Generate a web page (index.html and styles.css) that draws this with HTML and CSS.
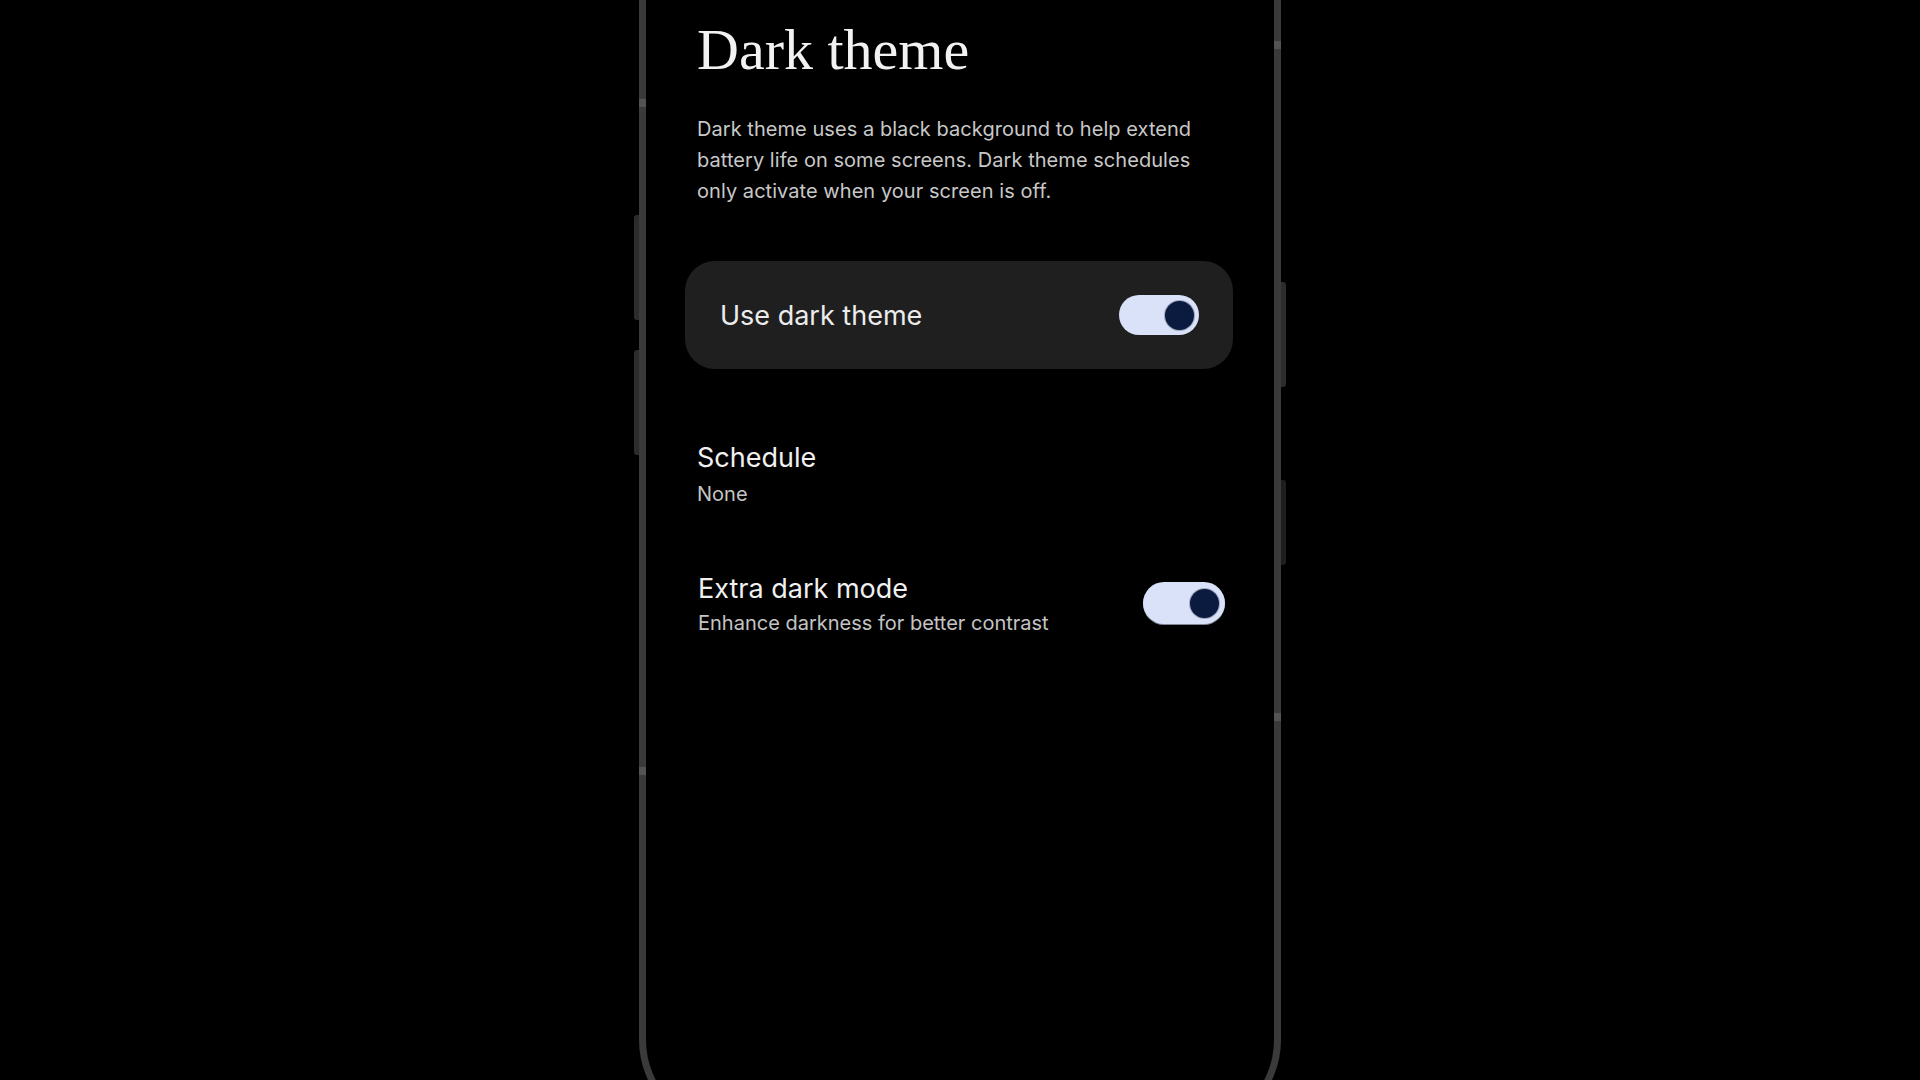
FILE: index.html
```html
<!DOCTYPE html>
<html lang="en">
<head>
<meta charset="utf-8">
<title>Dark theme</title>
<link rel="stylesheet" href="styles.css">
</head>
<body>
<div class="stage">
  <div class="phone">
    <span class="btn btn-l1"></span>
    <span class="btn btn-l2"></span>
    <span class="btn btn-r1"></span>
    <span class="btn btn-r2"></span>
    <span class="band band-l1"></span>
    <span class="band band-l2"></span>
    <span class="band band-r1"></span>
    <span class="band band-r2"></span>
    <div class="screen">
      <h1 class="title">Dark theme</h1>
      <p class="desc">Dark theme uses a black background to help extend battery life on some screens. Dark theme schedules only activate when your screen is off.</p>
      <div class="card">
        <span class="card-label">Use dark theme</span>
        <span class="switch"><span class="thumb"></span></span>
      </div>
      <div class="item schedule">
        <div class="item-title">Schedule</div>
        <div class="item-sub">None</div>
      </div>
      <div class="item extra">
        <div class="item-text">
          <div class="item-title">Extra dark mode</div>
          <div class="item-sub">Enhance darkness for better contrast</div>
        </div>
        <span class="switch switch-lg"><span class="thumb"></span></span>
      </div>
    </div>
  </div>
</div>
</body>
</html>
```

FILE: styles.css
```css
html, body {
  margin: 0;
  padding: 0;
  background: #000;
  width: 1920px;
  height: 1080px;
  overflow: hidden;
}

.stage {
  display: flex;
  justify-content: center;
  height: 1080px;
  overflow: hidden;
}

.phone {
  position: relative;
  box-sizing: border-box;
  width: 642px;
  height: 1233px;
  margin-top: -100px;
  border: 7px solid #3a3a3a;
  border-top: none;
  border-radius: 0 0 93px 93px;
  background: #000;
  flex: none;
}

.btn {
  position: absolute;
  width: 5px;
  background: #2c2c2c;
}
.btn-l1 { left: -12px; top: 315px; height: 105px; border-radius: 3px 0 0 3px; }
.btn-l2 { left: -12px; top: 450px; height: 105px; border-radius: 3px 0 0 3px; }
.btn-r1 { right: -12px; top: 382px; height: 105px; border-radius: 0 3px 3px 0; }
.btn-r2 { right: -12px; top: 580px; height: 85px; border-radius: 0 3px 3px 0; background: #1e1e1e; }

.band {
  position: absolute;
  width: 7px;
  height: 8px;
  background: #535353;
}
.band-l1 { left: -7px; top: 199px; }
.band-l2 { left: -7px; top: 867px; }
.band-r1 { right: -7px; top: 141px; }
.band-r2 { right: -7px; top: 813px; }

.screen {
  padding: 115px 41px 0 39px;
  font-family: Inter, "Noto Sans", sans-serif;
}

.title {
  margin: 0;
  padding-left: 12px;
  font-family: "Liberation Serif", "DejaVu Serif", serif;
  font-weight: 400;
  font-size: 58px;
  line-height: 70px;
  color: #f2f2f2;
}

.desc {
  margin: 29px 0 0 0;
  padding-left: 12px;
  max-width: 530px;
  font-size: 20px;
  line-height: 31px;
  letter-spacing: 0.05px;
  color: #c8c8c8;
}

.card {
  margin-top: 54px;
  height: 108px;
  box-sizing: border-box;
  padding: 0 34px 0 35px;
  background: #1f1f1f;
  border-radius: 30px;
  display: flex;
  align-items: center;
  justify-content: space-between;
}

.card-label {
  padding-top: 2px;
  font-size: 27px;
  line-height: 36px;
  color: #ececec;
}

.switch {
  box-sizing: border-box;
  width: 80px;
  height: 40px;
  border-radius: 20px;
  background: #dae2f9;
  display: flex;
  align-items: center;
  justify-content: flex-end;
  padding-right: 5px;
  flex: none;
}

.switch-lg {
  width: 82px;
  height: 42px;
  border-radius: 21px;
  padding-right: 6px;
  margin-top: -2px;
  box-shadow: 0 1px 0 #7f8594;
}

.thumb {
  width: 29px;
  height: 29px;
  border-radius: 50%;
  background: #0b1a3f;
  box-shadow: 0 0 0 1px #9ea6bd;
}

.item {
  padding-left: 12px;
}

.schedule {
  margin-top: 71px;
}

.schedule .item-sub {
  margin-top: 4px;
}

.extra {
  margin-top: 63px;
  padding-left: 13px;
  padding-right: 8px;
  display: flex;
  align-items: center;
  justify-content: space-between;
}

.extra .item-sub {
  margin-top: 2px;
}

.item-title {
  font-size: 27px;
  line-height: 36px;
  color: #f0f0f0;
}

.item-sub {
  font-size: 20px;
  line-height: 28px;
  color: #c4c4c4;
}
```
